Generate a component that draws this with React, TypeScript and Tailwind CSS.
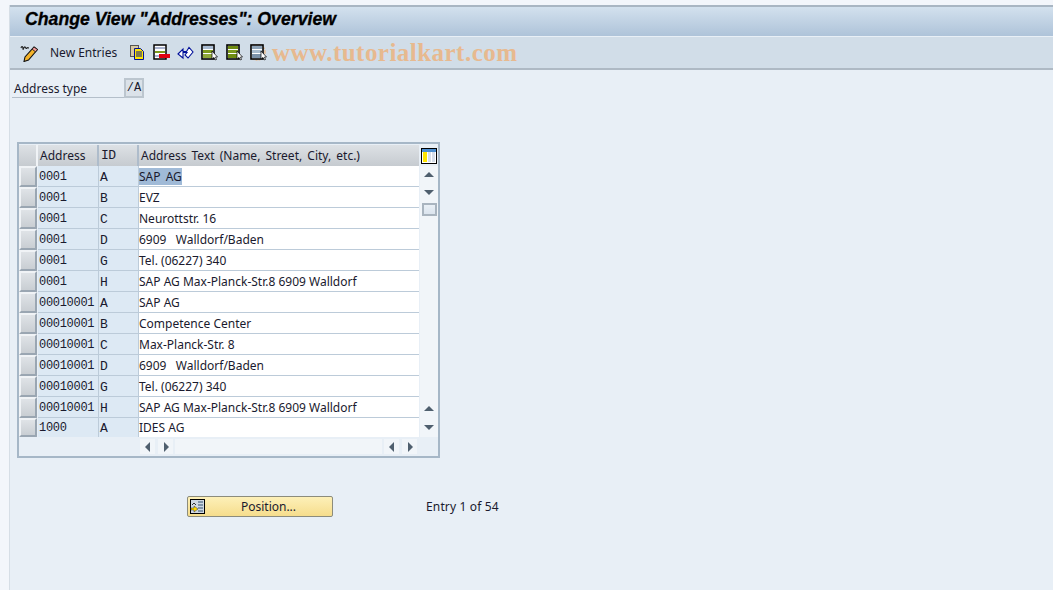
import React from "react";

const rows: [string, string, string][] = [
  ["0001", "A", "SAP AG"],
  ["0001", "B", "EVZ"],
  ["0001", "C", "Neurottstr. 16"],
  ["0001", "D", "6909   Walldorf/Baden"],
  ["0001", "G", "Tel. (06227) 340"],
  ["0001", "H", "SAP AG Max-Planck-Str.8 6909 Walldorf"],
  ["00010001", "A", "SAP AG"],
  ["00010001", "B", "Competence Center"],
  ["00010001", "C", "Max-Planck-Str. 8"],
  ["00010001", "D", "6909   Walldorf/Baden"],
  ["00010001", "G", "Tel. (06227) 340"],
  ["00010001", "H", "SAP AG Max-Planck-Str.8 6909 Walldorf"],
  ["1000", "A", "IDES AG"],
];

const Tri = ({ dir }: { dir: "up" | "down" | "left" | "right" }) => {
  const p = { up: "0,7 5,2 10,7", down: "0,2 10,2 5,7", left: "7,0 7,10 2,5", right: "3,0 3,10 8,5" }[dir];
  return (
    <svg width="10" height="10" viewBox="0 0 10 10">
      <polygon points={p} fill="#4f5f6e" />
    </svg>
  );
};

const ScrollBtn = ({ dir, className }: { dir: "up" | "down" | "left" | "right"; className: string }) => (
  <div className={`flex items-center justify-center bg-[#f1f5f9] ${className}`}>
    <Tri dir={dir} />
  </div>
);

const ListIcon = ({ a, b, c, ring }: { a: string; b: string; c: string; ring?: boolean }) => (
  <svg width="17" height="17" viewBox="0 0 17 17">
    {ring && <circle cx="7" cy="8" r="8" fill="none" stroke="#e8bd94" strokeWidth="1.5" strokeDasharray="2 1" />}
    <rect x="1" y="1" width="12" height="14" fill="#fff" stroke="#000" strokeWidth="1.6" />
    <rect x="2" y="2" width="10" height="3" fill={a} />
    <rect x="2" y="6" width="10" height="3" fill={b} />
    <rect x="2" y="10" width="10" height="4" fill={c} />
    <polygon points="11,7 11,15 13,13.5 14.5,16 15.5,15.5 14.5,13 16.5,13" fill="#fff" stroke="#000" strokeWidth="0.7" />
  </svg>
);

export default function App() {
  return (
    <div className="w-[1053px] h-[590px] overflow-hidden bg-[#f3f6fb] pt-[5px] pl-[9px] text-[12px] text-[#1a1a2e] font-['Noto_Sans','Open_Sans',sans-serif]">
      <div className="h-[585px] bg-[#e8eff6] border-l border-[#d6dee6]">
        {/* title */}
        <div className="h-[31px] border-t-2 border-[#a9b6c3] bg-gradient-to-b from-[#d3e1ee] to-[#aec3d9] pl-[15px] flex items-center">
          <span className="font-['Liberation_Sans',sans-serif] font-bold italic text-[17.7px] text-black relative top-[-2px] whitespace-nowrap [-webkit-text-stroke:0.3px_black]">
            Change View "Addresses": Overview
          </span>
        </div>
        {/* toolbar */}
        <div className="h-[33px] mt-px border-b-2 border-[#aeb9c4] bg-[#d1dde8] flex items-center pl-[10px]">
          <svg width="18" height="18" viewBox="0 0 18 18">
            <path d="M1 4c1-3 2-1 2 1s1-3 2-2 1 2 2 1 1 0 2 0" fill="none" stroke="#222" strokeWidth="1.1" />
            <path d="M14 3l3.5 2.5-9 10.5-4.5 1.5 1-4.5z" fill="#f4b32a" stroke="#111" strokeWidth="1.1" />
            <path d="M14 3l3.5 2.5-2 2.3-3.4-2.6z" fill="#f29a9a" stroke="#111" strokeWidth="0.8" />
          </svg>
          <span className="ml-[12px] w-[79px] text-[12px] whitespace-nowrap">New Entries</span>
          <div className="flex items-center gap-[7px]">
            <svg width="17" height="17" viewBox="0 0 17 17">
              <rect x="1.5" y="1.5" width="8" height="11" fill="#d8c9a0" stroke="#555" />
              <path d="M5.5 4.5h6l3 3v8h-9z" fill="#ffe600" stroke="#00109a" />
              <path d="M7 8h6M7 10h6M7 12h6" stroke="#00109a" />
            </svg>
            <svg width="17" height="17" viewBox="0 0 17 17">
              <rect x="1" y="1" width="12" height="14" fill="#fff" stroke="#000" strokeWidth="1.5" />
              <rect x="2" y="3" width="10" height="2" fill="#aab4d0" />
              <rect x="2" y="7" width="10" height="2" fill="#7d9a1e" />
              <rect x="2" y="11" width="5" height="2" fill="#aab4d0" />
              <rect x="6" y="10" width="11" height="4" fill="#e00010" />
            </svg>
            <svg width="17" height="17" viewBox="0 0 17 17">
              <path d="M1 10l5-5v2.5h3.5L12 3.5l4 4.5-5 6-3-3 2-2.5H6V14z" fill="#fff" stroke="#00109a" strokeWidth="1.1" />
            </svg>
            <ListIcon a="#a9bcd2" b="#7d9a1e" c="#8fa83a" />
            <span className="ml-[1px] flex"><ListIcon a="#6f8c12" b="#7d9a1e" c="#6f8c12" /></span>
            <ListIcon a="#8fa4b8" b="#a9bccd" c="#7c92a8" ring />
          </div>
          <span className="ml-[5px] font-['Liberation_Serif',serif] font-bold text-[25px] text-[#e7b98f] whitespace-nowrap tracking-[0.47px]">
            www.tutorialkart.com
          </span>
        </div>
        {/* field */}
        <div className="h-[28px] flex items-end pl-[2px]">
          <div className="w-[112px] h-[20px] border-b border-[#b4bfca] pl-[2px] leading-[21px] text-[12px]">Address type</div>
          <div className="w-[20px] h-[20px] bg-[#dbe2e9] border-2 border-[#bcc6cf] font-['Liberation_Mono',monospace] text-[12px] leading-[16px] text-center">/A</div>
        </div>
        {/* table */}
        <div className="ml-[7px] mt-[44px] w-[423px] h-[316px] border-2 border-[#a6b7c7] bg-[#e8eff6] pt-px">
          <div className="flex">
            <div className="w-[401px]">
              <div className="h-[21px] flex bg-gradient-to-b from-[#dde1e5] to-[#c6cbd0] text-[12px] leading-[22px]">
                <div className="w-[19px] border-r-2 border-[#f0f3f6]" />
                <div className="w-[61px] pl-[2px] border-r-2 border-[#aebccb]">Address</div>
                <div className="w-[40px] pl-[2px] border-r-2 border-[#aebccb] font-['Liberation_Mono',monospace] text-[13px] tracking-[-0.5px]">ID</div>
                <div className="flex-1 pl-[2px] whitespace-nowrap [word-spacing:2px]">Address Text (Name, Street, City, etc.)</div>
              </div>
              {rows.map(([a, id, t], i) => {
                const last = i === rows.length - 1;
                return (
                  <div key={i} className={`flex ${last ? "h-[19px]" : "h-[21px]"}`}>
                    <div className="w-[18px] mr-px bg-gradient-to-b from-[#dfe3e7] to-[#c9ced3] border-2 border-[#f0f3f6] border-r-[#9aa6b2] border-b-[#9aa6b2] rounded-[1px]" />
                    <div className={`w-[61px] pl-px bg-[#dde9f4] border-r border-[#bccbd9] ${last ? "" : "border-b"} border-b-[#bccbd9] font-['Liberation_Mono',monospace] text-[12px] tracking-[-0.3px] ${last ? "leading-[21px]" : "leading-[23px]"}`}>{a}</div>
                    <div className={`w-[40px] pl-[1px] bg-[#dde9f4] border-r border-[#bccbd9] ${last ? "" : "border-b"} border-b-[#bccbd9] font-['Liberation_Mono',monospace] text-[13px] ${last ? "leading-[21px]" : "leading-[23px]"}`}>{id}</div>
                    <div className={`flex-1 bg-white ${last ? "leading-[19px]" : "border-b leading-[21px]"} border-b-[#bccbd9] text-[12px] whitespace-pre`}>
                      {i === 0 ? <span className="bg-[#a0bad7] [word-spacing:2px]">{t}</span> : t}
                    </div>
                  </div>
                );
              })}
            </div>
            <div className="w-[18px] ml-px">
              <div className="h-[21px] flex items-center justify-center">
                <svg width="16" height="16" viewBox="0 0 16 16">
                  <rect x="0.5" y="0.5" width="15" height="15" fill="#fff" stroke="#000" />
                  <rect x="1" y="1" width="14" height="3" fill="#4d8fd0" />
                  <rect x="2" y="4" width="4" height="10" fill="#ffe600" />
                  <rect x="7" y="4" width="3" height="10" fill="#d6deea" />
                  <rect x="11" y="4" width="3" height="10" fill="#d6deea" />
                </svg>
              </div>
              <div className="h-[271px] bg-[#f1f5f9] flex flex-col items-center px-px">
                <ScrollBtn dir="up" className="w-[15px] h-[15px] mt-px" />
                <div className="w-full h-[3px] shrink-0" />
                <ScrollBtn dir="down" className="w-[15px] h-[15px]" />
                <div className="mt-[3px] w-[15px] h-[13px] shrink-0 border-2 border-[#a9b4bf] bg-gradient-to-b from-[#eaf0f6] to-[#dbe4ee]" />
                <div className="flex-1" />
                <ScrollBtn dir="up" className="w-[15px] h-[15px]" />
                <div className="w-full h-[4px] shrink-0" />
                <ScrollBtn dir="down" className="w-[15px] h-[15px] mb-[2px]" />
              </div>
            </div>
          </div>
          <div className="h-[18px] pt-px ml-[121px] w-[279px] flex items-center">
            <ScrollBtn dir="left" className="w-[15px] h-[15px]" />
            <ScrollBtn dir="right" className="w-[15px] h-[15px] ml-[3px]" />
            <div className="w-[207px] h-[15px] bg-[#f1f5f9] ml-[2px]" />
            <ScrollBtn dir="left" className="w-[15px] h-[15px] ml-[2px]" />
            <ScrollBtn dir="right" className="w-[15px] h-[15px] ml-[3px]" />
          </div>
        </div>
        {/* footer */}
        <div className="mt-[38px] ml-[177px] flex items-center">
          <div className="w-[146px] h-[21px] rounded-[2px] border border-[#8c8c7c] bg-gradient-to-b from-[#fdf0b8] to-[#f6dd8c] flex items-center">
            <svg width="15" height="15" viewBox="0 0 15 15" className="ml-[2px]">
              <rect x="0.5" y="0.5" width="14" height="14" fill="#cfd8e2" stroke="#000" />
              <path d="M8 3h5M8 6h5M8 9h5M8 12h5" stroke="#33506e" />
              <path d="M2 6l2-2 2 2" fill="none" stroke="#333" />
              <polygon points="1,9 4,9 4,7 8,10 4,13 4,11 1,11" fill="#ffd800" stroke="#333" strokeWidth="0.5" />
            </svg>
            <span className="flex-1 text-center text-[12px]">Position...</span>
          </div>
          <span className="ml-[93px] text-[12px] whitespace-nowrap tracking-[0.15px]">Entry 1 of 54</span>
        </div>
      </div>
    </div>
  );
}
